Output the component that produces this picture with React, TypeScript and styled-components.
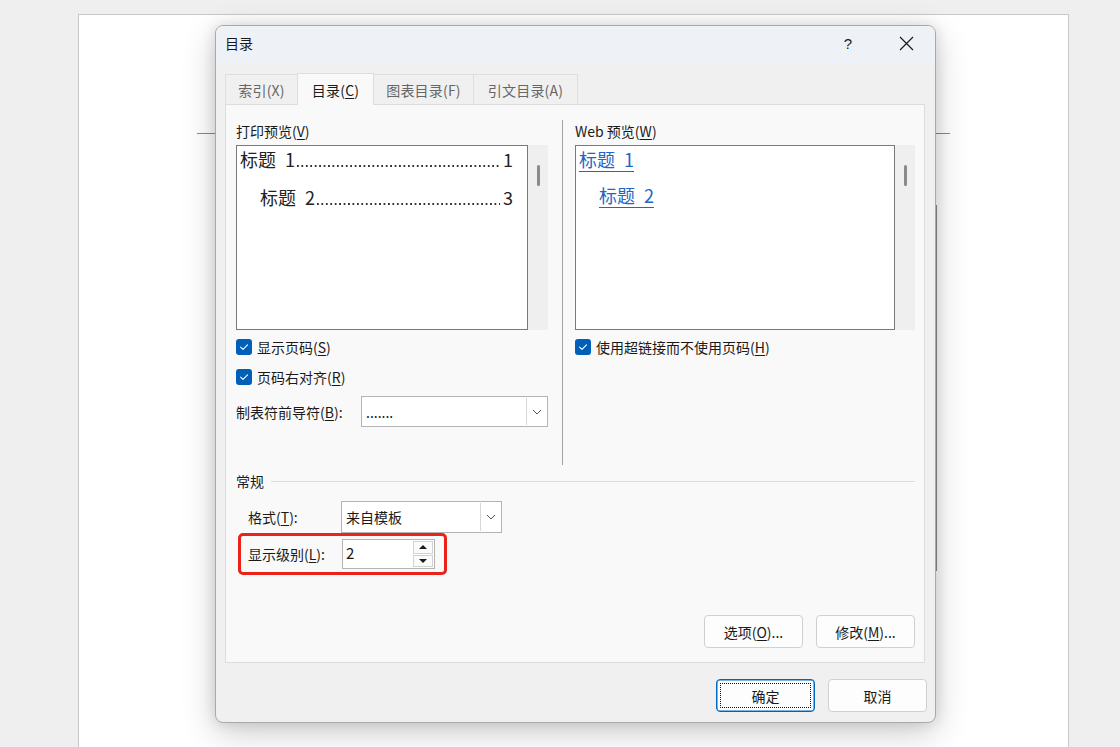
import React from 'react';
import styled, { createGlobalStyle, css } from 'styled-components';

const GlobalStyle = createGlobalStyle`
  html, body {
    margin: 0;
    padding: 0;
    background: #efefef;
    overflow: hidden;
  }
  body {
    font-family: "Noto Sans CJK SC", "Noto Sans", sans-serif;
    color: #1a1a1a;
    font-size: 14px;
  }
  u {
    text-underline-offset: 2px;
    text-decoration-thickness: 1px;
  }
`;

const Desktop = styled.div`
  position: relative;
  width: 1120px;
  height: 747px;
  overflow: hidden;
  padding: 14px 0 0 78px;
  box-sizing: border-box;
`;

const Page = styled.div`
  position: relative;
  width: 991px;
  height: 800px;
  background: #fff;
  border: 1px solid #c8c8c8;
  box-sizing: border-box;
`;

const MarginLine = styled.div<{ vertical?: boolean }>`
  position: absolute;
  background: #8a8a8a;
  ${(p) =>
    p.vertical
      ? css`
          left: 857px;
          top: 190px;
          width: 1px;
          height: 366px;
        `
      : css`
          left: 118px;
          top: 118px;
          width: 753px;
          height: 1px;
        `}
`;

const Dialog = styled.div`
  position: absolute;
  left: 215px;
  top: 25px;
  width: 721px;
  height: 698px;
  box-sizing: border-box;
  border: 1px solid #a9a9a9;
  border-radius: 8px;
  background: #f0f0f0;
  box-shadow: 0 10px 34px rgba(0, 0, 0, 0.2), 0 0 14px rgba(0, 0, 0, 0.12);
  display: flex;
  flex-direction: column;
  overflow: hidden;
`;

const TitleBar = styled.div`
  height: 37px;
  flex: none;
  display: flex;
  align-items: center;
  padding-left: 9px;
  background: #eef2f7;
`;

const TitleText = styled.div`
  flex: 1;
  font-size: 14px;
  line-height: 20px;
  padding-bottom: 3px;
`;

const TitleButton = styled.div<{ wide?: boolean }>`
  width: ${(p) => (p.wide ? 58 : 46)}px;
  margin-right: ${(p) => (p.wide ? 0 : 6)}px;
  height: 37px;
  display: flex;
  align-items: center;
  justify-content: center;
  padding-bottom: 2px;
  box-sizing: border-box;
  font-size: 15px;
  font-family: "Liberation Sans", sans-serif;
`;

const Body = styled.div`
  flex: 1;
  display: flex;
  flex-direction: column;
  padding: 10px 10px 10px 9px;
`;

const TabStrip = styled.div`
  display: flex;
  align-items: flex-end;
  height: 31px;
`;

const Tab = styled.div<{ active?: boolean; width: number }>`
  width: ${(p) => p.width + 1}px;
  height: 30px;
  display: flex;
  align-items: center;
  justify-content: center;
  box-sizing: border-box;
  border: 1px solid #dedede;
  border-bottom: none;
  margin-left: -1px;
  background: #f0f0f0;
  color: #666;
  font-size: 14px;
  letter-spacing: 0.2px;
  &:first-child {
    margin-left: 0;
  }
  ${(p) =>
    p.active &&
    css`
      position: relative;
      z-index: 1;
      height: 32px;
      margin-bottom: -1px;
      background: #f9f9f9;
      color: #1a1a1a;
    `}
`;

const Panel = styled.div`
  height: 559px;
  box-sizing: border-box;
  background: #f9f9f9;
  border: 1px solid #dcdcdc;
  padding: 15px 9px 14px 10px;
  display: flex;
  flex-direction: column;
`;

const Columns = styled.div`
  display: grid;
  grid-template-columns: 312px 1px 340px;
  column-gap: 13px;
  height: 345px;
  & > :nth-child(2) {
    margin-left: 1px;
  }
`;

const Column = styled.div`
  display: flex;
  flex-direction: column;
`;

const Separator = styled.div`
  background: #a3a3a3;
  width: 1px;
`;

const SectionLabel = styled.div`
  height: 22px;
  line-height: 22px;
  margin-bottom: 3px;
`;

const PreviewFrame = styled.div`
  display: flex;
  height: 185px;
`;

const PreviewBox = styled.div`
  flex: 1;
  background: #fff;
  border: 1px solid #7a7a7a;
  padding: 1px 14px 0 3px;
  overflow: hidden;
`;

const ScrollTrack = styled.div`
  width: 20px;
  flex: none;
  background: #efefef;
  display: flex;
  justify-content: center;
  padding-top: 20px;
  box-sizing: border-box;
`;

const ScrollThumb = styled.div`
  width: 3px;
  height: 21px;
  border-radius: 2px;
  background: #8a8a8a;
`;

const TocLine = styled.div<{ level: number }>`
  display: flex;
  font-size: 18px;
  line-height: 24px;
  color: #222;
  white-space: pre;
  margin-top: ${(p) => (p.level === 1 ? 0 : 14)}px;
  padding-left: ${(p) => (p.level === 1 ? 0 : 20)}px;
`;

const Leader = styled.span`
  flex: 1;
  margin-left: 2px;
  background-image: linear-gradient(90deg, #333 0 1.6px, transparent 1.6px);
  background-size: 4.45px 1.6px;
  background-repeat: repeat-x;
  background-position: 0 17.5px;
`;

const PageNum = styled.span`
  margin-left: 3px;
`;

const WebLink = styled.div<{ level: number }>`
  font-size: 18px;
  line-height: 24px;
  color: #1f67c6;
  text-decoration: underline;
  text-underline-offset: 4px;
  text-decoration-thickness: 1px;
  white-space: pre;
  margin-top: ${(p) => (p.level === 1 ? 0 : 12)}px;
  padding-left: ${(p) => (p.level === 1 ? 0 : 20)}px;
  width: max-content;
`;

const CheckRow = styled.div<{ first?: boolean }>`
  display: flex;
  align-items: center;
  gap: 5px;
  height: 30px;
  margin-top: ${(p) => (p.first ? 2 : 0)}px;
`;

const CheckBox = styled.div`
  width: 16px;
  height: 16px;
  border-radius: 3px;
  background: #005fb8;
  display: flex;
  align-items: center;
  justify-content: center;
`;

const FieldRow = styled.div`
  display: flex;
  align-items: center;
  height: 31px;
  margin-top: 4px;
`;

const FieldLabel = styled.div<{ width: number }>`
  width: ${(p) => p.width}px;
  flex: none;
`;

const Combo = styled.div<{ width: number }>`
  width: ${(p) => p.width}px;
  height: 100%;
  box-sizing: border-box;
  background: #fff;
  border: 1px solid #b4b4b4;
  display: flex;
`;

const ComboValue = styled.div`
  flex: 1;
  display: flex;
  align-items: center;
  padding-left: 4px;
`;

const ComboArrow = styled.div`
  width: 20px;
  margin: 1px;
  border-left: 1px solid #d6d6d6;
  display: flex;
  align-items: center;
  justify-content: center;
  box-sizing: border-box;
`;

const GeneralSection = styled.div`
  margin-top: 6px;
  display: flex;
  flex-direction: column;
`;

const GroupHeader = styled.div`
  display: flex;
  align-items: center;
  gap: 7px;
  height: 20px;
`;

const GroupRule = styled.div`
  flex: 1;
  height: 1px;
  background: #dcdcdc;
`;

const FormatRow = styled.div`
  display: flex;
  align-items: center;
  height: 32px;
  margin-top: 10px;
  padding-left: 12px;
`;

const HighlightRow = styled.div`
  width: 209px;
  height: 42px;
  margin-left: 2px;
  box-sizing: border-box;
  border: 3px solid #ea2218;
  border-radius: 5px;
  padding-left: 7px;
  display: flex;
  align-items: center;
`;

const Spinner = styled.div`
  width: 93px;
  height: 30px;
  box-sizing: border-box;
  background: #fff;
  border: 1px solid #b4b4b4;
  display: flex;
`;

const SpinValue = styled.div`
  flex: 1;
  padding-left: 3px;
  font-size: 15px;
  line-height: 26px;
`;

const SpinButtons = styled.div`
  width: 20px;
  display: flex;
  flex-direction: column;
  gap: 1px;
  padding: 1px 1px 1px 0;
`;

const SpinButton = styled.div<{ down?: boolean }>`
  flex: 1;
  box-sizing: border-box;
  border: 1px solid #d2d2d2;
  background: #fbfbfb;
  display: flex;
  align-items: center;
  justify-content: center;
  &::before {
    content: '';
    width: 0;
    height: 0;
    border-left: 4px solid transparent;
    border-right: 4px solid transparent;
    ${(p) =>
      p.down
        ? css`
            border-top: 4px solid #1a1a1a;
          `
        : css`
            border-bottom: 4px solid #1a1a1a;
          `}
  }
`;

const ButtonRow = styled.div<{ footer?: boolean }>`
  display: flex;
  justify-content: flex-end;
  gap: 13px;
  ${(p) =>
    p.footer
      ? css`
          margin-top: 16px;
          margin-right: -2px;
        `
      : css`
          margin-top: auto;
        `}
`;

const Button = styled.div<{ primary?: boolean }>`
  position: relative;
  width: 99px;
  height: 33px;
  box-sizing: border-box;
  border: 1px solid #d0d0d0;
  border-radius: 4px;
  background: #fdfdfd;
  display: flex;
  align-items: center;
  justify-content: center;
  font-size: 14px;
  ${(p) =>
    p.primary &&
    css`
      border-color: #0067c0;
      box-shadow: inset 0 0 0 0.5px #0067c0;
      &::after {
        content: '';
        position: absolute;
        inset: 3px;
        border: 1px dotted #111;
      }
    `}
`;

const Check = () => (
  <svg width="10" height="10" viewBox="0 0 10 10" fill="none">
    <path d="M1.6 5.2 L4 7.4 L8.5 2.8" stroke="#fff" strokeWidth="1.1" strokeLinecap="round" strokeLinejoin="round" />
  </svg>
);

const Chevron = () => (
  <svg width="10" height="6" viewBox="0 0 10 6" fill="none">
    <path d="M1 1 L5 5 L9 1" stroke="#555" strokeWidth="1" />
  </svg>
);

const CloseIcon = () => (
  <svg width="15" height="15" viewBox="0 0 15 15" fill="none">
    <path d="M1 1 L14 14 M14 1 L1 14" stroke="#1a1a1a" strokeWidth="1.2" />
  </svg>
);

const tabs = [
  { label: '索引(X)', width: 72 },
  { label: '目录', key: 'C', width: 76, active: true },
  { label: '图表目录(F)', width: 100 },
  { label: '引文目录(A)', width: 104 },
];

// en-space between heading word and its number, as Word shows it
const gap = '\u2002';

const entries = [
  { level: 1, num: '1', page: '1' },
  { level: 2, num: '2', page: '3' },
];

export default function App() {
  return (
    <>
      <GlobalStyle />
      <Desktop>
        <Page>
          <MarginLine />
          <MarginLine vertical />
        </Page>

        <Dialog>
          <TitleBar>
            <TitleText>目录</TitleText>
            <TitleButton>?</TitleButton>
            <TitleButton wide>
              <CloseIcon />
            </TitleButton>
          </TitleBar>

          <Body>
            <TabStrip>
              {tabs.map((t) => (
                <Tab key={t.label} active={t.active} width={t.width}>
                  {t.key ? (
                    <>
                      {t.label}(<u>{t.key}</u>)
                    </>
                  ) : (
                    t.label
                  )}
                </Tab>
              ))}
            </TabStrip>

            <Panel>
              <Columns>
                <Column>
                  <SectionLabel>
                    打印预览(<u>V</u>)
                  </SectionLabel>
                  <PreviewFrame>
                    <PreviewBox>
                      {entries.map((e) => (
                        <TocLine key={e.num} level={e.level}>
                          <span>{`标题${gap}${e.num}`}</span>
                          <Leader />
                          <PageNum>{e.page}</PageNum>
                        </TocLine>
                      ))}
                    </PreviewBox>
                    <ScrollTrack>
                      <ScrollThumb />
                    </ScrollTrack>
                  </PreviewFrame>

                  <CheckRow first>
                    <CheckBox>
                      <Check />
                    </CheckBox>
                    <span>
                      显示页码(<u>S</u>)
                    </span>
                  </CheckRow>
                  <CheckRow>
                    <CheckBox>
                      <Check />
                    </CheckBox>
                    <span>
                      页码右对齐(<u>R</u>)
                    </span>
                  </CheckRow>

                  <FieldRow>
                    <FieldLabel width={125}>
                      制表符前导符(<u>B</u>):
                    </FieldLabel>
                    <Combo width={187}>
                      <ComboValue>.......</ComboValue>
                      <ComboArrow>
                        <Chevron />
                      </ComboArrow>
                    </Combo>
                  </FieldRow>
                </Column>

                <Separator />

                <Column>
                  <SectionLabel>
                    Web 预览(<u>W</u>)
                  </SectionLabel>
                  <PreviewFrame>
                    <PreviewBox>
                      {entries.map((e) => (
                        <WebLink key={e.num} level={e.level}>{`标题${gap}${e.num}`}</WebLink>
                      ))}
                    </PreviewBox>
                    <ScrollTrack>
                      <ScrollThumb />
                    </ScrollTrack>
                  </PreviewFrame>

                  <CheckRow first>
                    <CheckBox>
                      <Check />
                    </CheckBox>
                    <span>
                      使用超链接而不使用页码(<u>H</u>)
                    </span>
                  </CheckRow>
                </Column>
              </Columns>

              <GeneralSection>
                <GroupHeader>
                  <span>常规</span>
                  <GroupRule />
                </GroupHeader>

                <FormatRow>
                  <FieldLabel width={93}>
                    格式(<u>T</u>):
                  </FieldLabel>
                  <Combo width={161}>
                    <ComboValue>来自模板</ComboValue>
                    <ComboArrow>
                      <Chevron />
                    </ComboArrow>
                  </Combo>
                </FormatRow>

                <HighlightRow>
                  <FieldLabel width={94}>
                    显示级别(<u>L</u>):
                  </FieldLabel>
                  <Spinner>
                    <SpinValue>2</SpinValue>
                    <SpinButtons>
                      <SpinButton />
                      <SpinButton down />
                    </SpinButtons>
                  </Spinner>
                </HighlightRow>
              </GeneralSection>

              <ButtonRow>
                <Button>
                  选项(<u>O</u>)...
                </Button>
                <Button>
                  修改(<u>M</u>)...
                </Button>
              </ButtonRow>
            </Panel>

            <ButtonRow footer>
              <Button primary>确定</Button>
              <Button>取消</Button>
            </ButtonRow>
          </Body>
        </Dialog>
      </Desktop>
    </>
  );
}
